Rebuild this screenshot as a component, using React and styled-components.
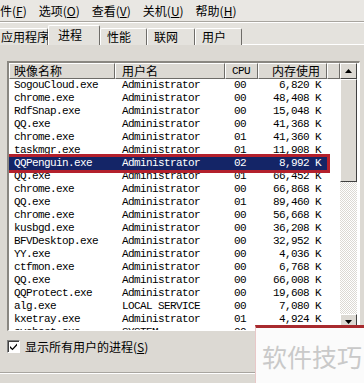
import React from "react";
import styled, { createGlobalStyle } from "styled-components";

const Global = createGlobalStyle`
  html, body { margin: 0; padding: 0; background: #dcd9d3; overflow: hidden; }
  * { box-sizing: border-box; }
`;

const CJK = `"Noto Sans CJK SC", "Noto Sans", sans-serif`;
const MONO = `"Liberation Mono", "Noto Sans CJK SC", monospace`;

const Window = styled.div`
  position: relative;
  width: 364px;
  height: 383px;
  overflow: hidden;
  background: #dcd9d3;
  font-family: ${CJK};
  font-size: 12px;
  color: #000;
  display: flex;
  flex-direction: column;
`;

const MenuBar = styled.div`
  height: 21px;
  display: flex;
  align-items: center;
  margin-left: -18px;
  background: #e9e7e3;
  flex-shrink: 0;
`;

const MenuItem = styled.div`
  padding: 0 6px;
  line-height: 21px;
  white-space: nowrap;
  u { text-decoration: underline; }
`;

const Separator = styled.div`
  height: 2px;
  border-top: 1px solid #a8a59f;
  border-bottom: 1px solid #ffffff;
  flex-shrink: 0;
`;

const TabRow = styled.div`
  height: 22px;
  display: flex;
  align-items: flex-end;
  margin-left: -6px;
  flex-shrink: 0;
  position: relative;
  background: #e4e2dd;
  &::after {
    content: "";
    position: absolute;
    left: 0;
    right: 0;
    bottom: 0;
    height: 1px;
    background: #ffffff;
  }
`;

const Tab = styled.div`
  position: relative;
  z-index: ${(p) => (p.$active ? 2 : 1)};
  width: ${(p) => p.$w}px;
  height: ${(p) => (p.$active ? 20 : 17)}px;
  padding-left: ${(p) => (p.$active ? 9 : 6)}px;
  line-height: ${(p) => (p.$active ? 18 : 16)}px;
  background: ${(p) => (p.$active ? "#e4e2dd" : "#e4e2dd")};
  border-top: 1px solid #ffffff;
  border-left: 1px solid #ffffff;
  border-right: 1px solid #6e6c68;
  border-radius: 2px 2px 0 0;
  white-space: nowrap;
  font-size: 12px;
`;

const Panel = styled.div`
  flex: 1;
  padding: 16px 4px 0 7px;
  display: flex;
  flex-direction: column;
  background: #dcd9d3;
`;

const ListBox = styled.div`
  height: 270px;
  border-top: 2px solid #8a8781;
  border-left: 2px solid #8a8781;
  border-right: 1px solid #ffffff;
  border-bottom: 1px solid #ffffff;
  background: #ffffff;
  display: flex;
  overflow: hidden;
`;

const ListBody = styled.div`
  width: 331px;
  overflow: hidden;
  flex-shrink: 0;
`;

const HeaderRow = styled.div`
  display: flex;
  height: 16px;
`;

const HeaderCell = styled.div`
  width: ${(p) => p.$w}px;
  height: 16px;
  background: #dcd9d3;
  border-top: 1px solid #ffffff;
  border-left: 1px solid #ffffff;
  border-right: 1px solid #6e6c68;
  border-bottom: 1px solid #6e6c68;
  padding: 0 ${(p) => (p.$right ? 6 : 0)}px 0 ${(p) => p.$pl || 0}px;
  text-align: ${(p) => (p.$right ? "right" : "left")};
  font-family: ${(p) => (p.$mono ? MONO : CJK)};
  font-size: ${(p) => (p.$mono ? "11px" : "12px")};
  letter-spacing: ${(p) => (p.$mono ? "-0.6px" : "0")};
  line-height: 14px;
  white-space: nowrap;
  overflow: hidden;
  flex-shrink: 0;
`;

const Row = styled.div`
  display: flex;
  width: 318px;
  height: 13px;
  background: ${(p) => (p.$selected ? "#142567" : "transparent")};
  color: ${(p) => (p.$selected ? "#ffffff" : "#000000")};
  outline: ${(p) => (p.$selected ? "3px solid #b3202c" : "none")};
  position: relative;
  z-index: ${(p) => (p.$selected ? 1 : 0)};
`;

const Cell = styled.div`
  width: ${(p) => p.$w}px;
  flex-shrink: 0;
  padding: 0 ${(p) => p.$pr || 0}px 0 ${(p) => p.$pl || 0}px;
  text-align: ${(p) => (p.$right ? "right" : "left")};
  font-family: ${MONO};
  font-size: 11px;
  letter-spacing: -0.6px;
  line-height: 13px;
  white-space: nowrap;
  overflow: hidden;
`;

const ScrollBar = styled.div`
  width: 17px;
  flex-shrink: 0;
  display: flex;
  flex-direction: column;
  background-color: #f4f3f0;
  background-image: repeating-conic-gradient(#dcd9d3 0 25%, #ffffff 0 50%);
  background-size: 2px 2px;
`;

const ScrollButton = styled.div`
  height: ${(p) => p.$h}px;
  background: #dcd9d3;
  border-top: 1px solid #ffffff;
  border-left: 1px solid #ffffff;
  border-right: 1px solid #404040;
  border-bottom: 1px solid #404040;
  display: flex;
  align-items: center;
  justify-content: center;
  flex-shrink: 0;
`;

const Track = styled.div`
  flex: 1;
`;

const BottomBar = styled.div`
  display: flex;
  align-items: center;
  gap: 5px;
  margin-top: 9px;
  height: 13px;
  white-space: nowrap;
`;

const CheckBox = styled.div`
  width: 13px;
  height: 13px;
  background: #ffffff;
  border-top: 1px solid #808080;
  border-left: 1px solid #808080;
  border-right: 1px solid #ffffff;
  border-bottom: 1px solid #ffffff;
  box-shadow: inset 1px 1px 0 #404040;
  display: flex;
  align-items: center;
  justify-content: center;
  flex-shrink: 0;
`;

const CheckLabel = styled.span`
  font-size: 12px;
  line-height: 13px;
  u { text-decoration: underline; }
`;

const StatusLine = styled.div`
  margin-top: auto;
  margin-left: -7px;
  margin-right: -4px;
  height: 11px;
  border-top: 1px solid #a8a59f;
  box-shadow: inset 0 1px 0 #ffffff;
`;

const Watermark = styled.div`
  position: absolute;
  left: 255px;
  top: 325px;
  width: 109px;
  height: 58px;
  background: #fbfbfb;
  border-top: 3px solid #a82a2e;
  border-left: 1px solid #e8c8c8;
  display: flex;
  align-items: center;
  justify-content: center;
  padding-left: 4px;
  font-family: ${CJK};
  font-size: 25px;
  color: #c9c9c9;
  letter-spacing: 0px;
`;

const rows = [
  ["SogouCloud.exe", "Administrator", "00", "6,820 K"],
  ["chrome.exe", "Administrator", "00", "48,408 K"],
  ["RdfSnap.exe", "Administrator", "00", "15,048 K"],
  ["QQ.exe", "Administrator", "00", "41,368 K"],
  ["chrome.exe", "Administrator", "01", "41,360 K"],
  ["taskmgr.exe", "Administrator", "01", "11,908 K"],
  ["QQPenguin.exe", "Administrator", "02", "8,992 K", true],
  ["QQ.exe", "Administrator", "01", "66,452 K"],
  ["chrome.exe", "Administrator", "00", "66,868 K"],
  ["QQ.exe", "Administrator", "01", "89,460 K"],
  ["chrome.exe", "Administrator", "00", "56,668 K"],
  ["kusbgd.exe", "Administrator", "00", "36,208 K"],
  ["BFVDesktop.exe", "Administrator", "00", "32,952 K"],
  ["YY.exe", "Administrator", "00", "4,036 K"],
  ["ctfmon.exe", "Administrator", "00", "6,768 K"],
  ["QQ.exe", "Administrator", "00", "66,008 K"],
  ["QQProtect.exe", "Administrator", "00", "19,608 K"],
  ["alg.exe", "LOCAL SERVICE", "00", "7,080 K"],
  ["kxetray.exe", "Administrator", "01", "4,924 K"],
  ["svchost.exe", "SYSTEM", "00", "3,544 K"],
];

const Arrow = ({ up }) => (
  <svg width="7" height="4" viewBox="0 0 7 4">
    {up ? <path d="M3.5 0 L7 4 L0 4 Z" fill="#000" /> : <path d="M0 0 L7 0 L3.5 4 Z" fill="#000" />}
  </svg>
);

export default function App() {
  return (
    <>
      <Global />
      <Window>
        <MenuBar>
          <MenuItem>文件(<u>F</u>)</MenuItem>
          <MenuItem>选项(<u>O</u>)</MenuItem>
          <MenuItem>查看(<u>V</u>)</MenuItem>
          <MenuItem>关机(<u>U</u>)</MenuItem>
          <MenuItem>帮助(<u>H</u>)</MenuItem>
        </MenuBar>
        <Separator />
        <TabRow>
          <Tab $w={54}>应用程序</Tab>
          <Tab $w={52} $active>进程</Tab>
          <Tab $w={47}>性能</Tab>
          <Tab $w={48}>联网</Tab>
          <Tab $w={47}>用户</Tab>
        </TabRow>
        <Panel>
          <ListBox>
            <ListBody>
              <HeaderRow>
                <HeaderCell $w={106} $pl={4}>映像名称</HeaderCell>
                <HeaderCell $w={110} $pl={6}>用户名</HeaderCell>
                <HeaderCell $w={33} $pl={6} $mono>CPU</HeaderCell>
                <HeaderCell $w={69} $right>内存使用</HeaderCell>
                <HeaderCell $w={13} />
              </HeaderRow>
              {rows.map(([name, user, cpu, mem, sel], i) => (
                <Row key={i} $selected={sel}>
                  <Cell $w={106} $pl={5}>{name}</Cell>
                  <Cell $w={110} $pl={7}>{user}</Cell>
                  <Cell $w={33} $pl={9}>{cpu}</Cell>
                  <Cell $w={69} $right $pr={6}>{mem}</Cell>
                </Row>
              ))}
            </ListBody>
            <ScrollBar>
              <ScrollButton $h={16}><Arrow up /></ScrollButton>
              <ScrollButton $h={103} />
              <Track />
              <ScrollButton $h={16}><Arrow /></ScrollButton>
            </ScrollBar>
          </ListBox>
          <BottomBar>
            <CheckBox>
              <svg width="9" height="9" viewBox="0 0 9 9">
                <path d="M1 4 L3.5 6.5 L8 1.5 L8 3.5 L3.5 8.3 L1 6 Z" fill="#000" />
              </svg>
            </CheckBox>
            <CheckLabel>显示所有用户的进程(<u>S</u>)</CheckLabel>
          </BottomBar>
          <StatusLine />
        </Panel>
        <Watermark>软件技巧</Watermark>
      </Window>
    </>
  );
}
